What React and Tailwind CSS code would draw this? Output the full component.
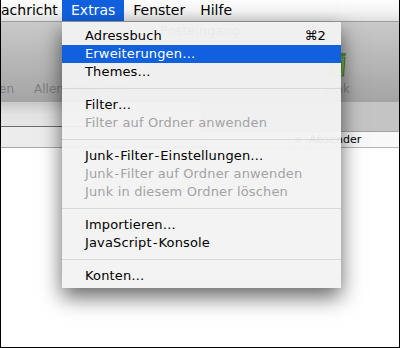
import React from 'react';

const menuItems = [
  { label: 'Adressbuch', shortcut: '⌘2' },
  { label: 'Erweiterungen…', active: true },
  { label: 'Themes…' },
  { sep: true },
  { label: 'Filter…' },
  { label: 'Filter auf Ordner anwenden', disabled: true },
  { sep: true },
  { label: 'Junk-Filter-Einstellungen…' },
  { label: 'Junk-Filter auf Ordner anwenden', disabled: true },
  { label: 'Junk in diesem Ordner löschen', disabled: true },
  { sep: true },
  { label: 'Importieren…' },
  { label: 'JavaScript-Konsole' },
  { sep: true },
  { label: 'Konten…' },
];

const JunkIcon = () => (
  <svg width="26" height="28" viewBox="0 0 26 28">
    <rect x="4" y="3" width="18" height="3" rx="1" fill="#5e8f3e" />
    <path d="M5 7 H21 L19.5 26 H6.5 Z" fill="#7bb04f" stroke="#4d7a31" strokeWidth="1" />
    <path d="M9 10 V23 M13 10 V23 M17 10 V23" stroke="#5a8a3a" strokeWidth="1.2" />
  </svg>
);

// Lucida draws its hyphen wider than DejaVu, so give it a little room
const Label = ({ text }) => {
  const parts = text.split('-');
  return (
    <span>
      {parts.map((p, i) => (
        <React.Fragment key={i}>
          {i > 0 && <span className="mx-[1px]">-</span>}
          {p}
        </React.Fragment>
      ))}
    </span>
  );
};

const MenuRow = ({ item }) => {
  if (item.sep) {
    return (
      <div className="h-[15px] flex items-center">
        <div className="w-full h-px bg-[#d7d7d7]" />
      </div>
    );
  }
  const tone = item.active
    ? 'bg-[#1160dd] text-white'
    : item.disabled
    ? 'text-[#a3a3a3]'
    : 'text-black';
  return (
    <div className={`h-[18px] flex items-center justify-between pl-[23px] pr-[15px] text-[13px] leading-[18px] tracking-[0.15px] ${tone}`}>
      <Label text={item.label} />
      {item.shortcut && <span>{item.shortcut}</span>}
    </div>
  );
};

export default function App() {
  return (
    <div className="w-[400px] h-[348px] relative overflow-hidden bg-white border-x border-b border-black font-['DejaVu_Sans',sans-serif]">
      {/* menu bar */}
      <div className="h-[22px] flex items-stretch bg-gradient-to-b from-[#fdfdfd] via-[#f4f4f4] to-[#e0e0e0] border-b border-[#9c9c9c] text-[14px] leading-[21px] text-black">
        <div className="w-[61px]">achricht</div>
        <div className="px-[9px] bg-[#1160dd] text-white">Extras</div>
        <div className="pl-[9px] pr-[6px]">Fenster</div>
        <div className="pl-[9px]">Hilfe</div>
      </div>

      {/* toolbar */}
      <div className="h-[80px] flex flex-col bg-gradient-to-b from-[#c9c9c9] to-[#a4a4a4]">
        <div className="h-[18px] text-center text-[13px] leading-[18px] text-[#3c3c3c]">Posteingang</div>
        <div className="flex-1 flex justify-between items-end pb-[4px]">
          <div className="flex gap-[20px] text-[12px] text-[#808080] -ml-[2px]">
            <span>en</span>
            <span>Allen antworten</span>
          </div>
          <div className="w-[40px] mr-[42px] flex flex-col items-center text-[12px] text-[#808080]">
            <JunkIcon />
            <span className="mt-[2px]">Junk</span>
          </div>
        </div>
      </div>

      {/* panes */}
      <div className="flex h-[245px]">
        <div className="w-[200px] flex flex-col">
          <div className="h-[25px] bg-gradient-to-b from-[#c8c8c8] via-[#e2e2e2] to-[#e6e6e6] border-b border-[#6c6c6c]" />
          <div className="h-[21px] bg-[#ececec] border-b border-[#a9a9a9]" />
          <div className="flex-1 bg-white" />
        </div>
        <div className="flex-1 flex flex-col">
          <div className="h-[30px] bg-[#c4c4c4] border-b border-[#a2a2a2]" />
          <div className="h-[16px] flex bg-[#f8f8f8] border-b border-[#b5b5b5] text-[11px] leading-[15px] text-black">
            <div className="w-[88px]" />
            <div className="w-[18px] border-x border-[#cfcfcf] flex items-center justify-center">
              <div className="w-[6px] h-[6px] rounded-full bg-[#8a8a8a]" />
            </div>
            <div className="pl-[2px]">Absender</div>
          </div>
          <div className="flex-1 bg-white" />
        </div>
      </div>

      {/* Extras menu */}
      <div className="absolute left-[61px] top-[22px] w-[279px] h-[266px] pt-[5px] bg-[#f2f2f2]/95 shadow-[0_9px_20px_rgba(0,0,0,0.6)]">
        {menuItems.map((item, i) => (
          <MenuRow key={i} item={item} />
        ))}
      </div>
    </div>
  );
}
